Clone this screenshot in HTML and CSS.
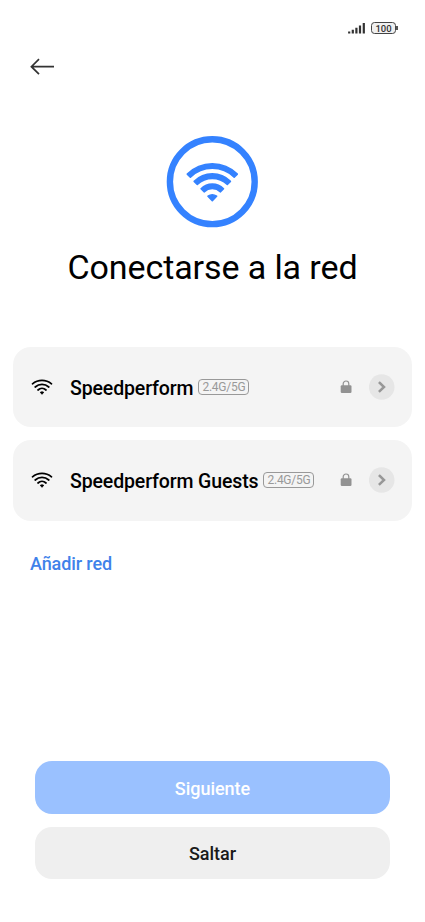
FILE: index.html
```html
<!DOCTYPE html>
<html lang="es">
<head>
<meta charset="utf-8">
<title>Conectarse a la red</title>
<link rel="stylesheet" href="styles.css">
</head>
<body>
<svg class="defs" width="0" height="0" aria-hidden="true">
  <symbol id="wifi" viewBox="0 0 22 17">
    <g fill="none" stroke="#000" stroke-width="1.75" stroke-linecap="round">
      <path d="M1.5 4.8C7 .2 15 .2 20.5 4.8"/>
      <path d="M4.2 8C8.2 4.6 13.8 4.6 17.8 8"/>
      <path d="M7 11C9.3 8.9 12.7 8.9 15 11"/>
    </g>
    <path d="M9.3 13.3Q11 12.3 12.7 13.3L11 15.3Z" stroke="#000" stroke-width=".9" stroke-linejoin="round"/>
  </symbol>
  <symbol id="lock" viewBox="0 0 12 14">
    <path d="M3.2 6V3.8a2.8 2.8 0 0 1 5.6 0V6" fill="none" stroke="#929292" stroke-width="1.2"/>
    <rect x=".7" y="5.2" width="10.8" height="7.8" rx="1.2" fill="#929292"/>
  </symbol>
  <symbol id="chevron" viewBox="0 0 26 26">
    <circle cx="12.7" cy="13" r="12.8" fill="#e6e6e6"/>
    <path d="M10.8 9L15 13L10.8 17" fill="none" stroke="#979797" stroke-width="2.5" stroke-linecap="square"/>
  </symbol>
</svg>
<header class="status">
  <svg width="18" height="12" viewBox="0 0 18 12"><path d="M1.2 9.6v2M4.8 7.8v3.8M8.4 5.8v5.8M12 3.6v8M15.8 1v10.6" stroke="#333" stroke-width="2.2"/></svg>
  <span class="battery">100</span>
</header>
<nav class="nav">
  <svg width="26" height="18" viewBox="0 0 26 18"><path d="M25 8.7H2.8M10 1.2L2.4 8.7L10 16.2" fill="none" stroke="#333" stroke-width="1.7"/></svg>
</nav>
<main>
  <svg class="hero" width="92" height="92" viewBox="0 0 92 92">
    <circle cx="46.3" cy="45.7" r="42.4" fill="none" stroke="#3482ff" stroke-width="6.4"/>
    <g fill="#3482ff" stroke="#3482ff" stroke-linejoin="round" stroke-width="1.6">
      <path d="M21.3 38.1A35.2 35.2 0 0 1 71.3 38.1L68.2 41.2A31.4 31.4 0 0 0 24.4 41.2Z"/>
      <path d="M28.2 45.4A25.6 25.6 0 0 1 64.4 45.4L61.3 48.5A21.9 21.9 0 0 0 31.3 48.5Z"/>
      <path d="M35.1 52.8A15.8 15.8 0 0 1 57.5 52.8L54.5 55.8A12 12 0 0 0 38.1 55.8Z"/>
      <path d="M42 60.2Q46.3 57.2 50.6 60.2L46.3 64.6Z"/>
    </g>
  </svg>
  <h1>Conectarse a la red</h1>
  <section class="networks">
    <div class="network">
      <svg class="signal" width="22" height="17"><use href="#wifi"/></svg>
      <span class="name">Speedperform</span><span class="band">2.4G/5G</span>
      <svg class="lock" width="12" height="14"><use href="#lock"/></svg>
      <svg width="26" height="26"><use href="#chevron"/></svg>
    </div>
    <div class="network">
      <svg class="signal" width="22" height="17"><use href="#wifi"/></svg>
      <span class="name">Speedperform Guests</span><span class="band">2.4G/5G</span>
      <svg class="lock" width="12" height="14"><use href="#lock"/></svg>
      <svg width="26" height="26"><use href="#chevron"/></svg>
    </div>
  </section>
  <a class="add">Añadir red</a>
</main>
<footer class="actions">
  <button class="next">Siguiente</button>
  <button class="skip">Saltar</button>
</footer>
</body>
</html>
```
FILE: styles.css
```css
* { box-sizing: border-box; }
body {
  margin: 0;
  height: 922px;
  display: flex;
  flex-direction: column;
  background: #fff;
  color: #000;
  font-family: Roboto, sans-serif;
  overflow: hidden;
}
svg { display: block; flex: none; }
.defs { position: absolute; }
.status {
  display: flex;
  justify-content: flex-end;
  align-items: center;
  gap: 5px;
  height: 34px;
  padding: 22px 29px 0 0;
}
.battery {
  position: relative;
  width: 25px;
  height: 12px;
  border: 1px solid #444;
  border-radius: 3.5px;
  background: #f0f0f0;
  font-size: 9.5px;
  font-weight: 500;
  line-height: 11px;
  text-align: center;
  letter-spacing: -.1px;
  color: #333;
}
.battery::after {
  content: "";
  position: absolute;
  right: -3px;
  top: 3px;
  width: 2px;
  height: 4px;
  background: #555;
}
.nav { height: 102px; padding: 24px 0 0 29px; }
main { display: flex; flex-direction: column; }
.hero { margin-left: 166px; }
h1 {
  margin: 19px 0 0;
  height: 41px;
  line-height: 41px;
  font-size: 34px;
  font-weight: 400;
  letter-spacing: -.1px;
  text-align: center;
  white-space: nowrap;
}
.networks {
  display: flex;
  flex-direction: column;
  gap: 13px;
  padding: 59px 13px 0;
}
.network {
  display: flex;
  align-items: center;
  height: 80.3px;
  padding: 0 17px 0 18px;
  border-radius: 18px;
  background: #f4f4f4;
}
.signal { margin-right: 17px; }
.name {
  margin-top: 4px;
  font-size: 19.5px;
  font-weight: 500;
  line-height: 22px;
  letter-spacing: -.13px;
  white-space: nowrap;
}
.band {
  width: 51px;
  height: 16px;
  margin: 0 auto 0 5px;
  border: 1px solid #999;
  border-radius: 4px;
  font-size: 12px;
  line-height: 15px;
  letter-spacing: -.25px;
  text-align: center;
  color: #999;
}
.lock { margin-right: 17px; }
.add {
  margin: 31px 0 0 30px;
  font-size: 18px;
  font-weight: 500;
  line-height: 24px;
  letter-spacing: -.1px;
  color: #3f82ea;
}
.actions {
  display: flex;
  flex-direction: column;
  gap: 13px;
  margin-top: auto;
  padding: 0 35px 43px;
}
button {
  height: 52.5px;
  padding: 2px 0 0;
  border: 0;
  border-radius: 17px;
  font: 500 18px Roboto, sans-serif;
  letter-spacing: -.03px;
}
.next { background: #9ac1ff; color: #fff; }
.skip { background: #efefef; color: #1a1a1a; }
```
